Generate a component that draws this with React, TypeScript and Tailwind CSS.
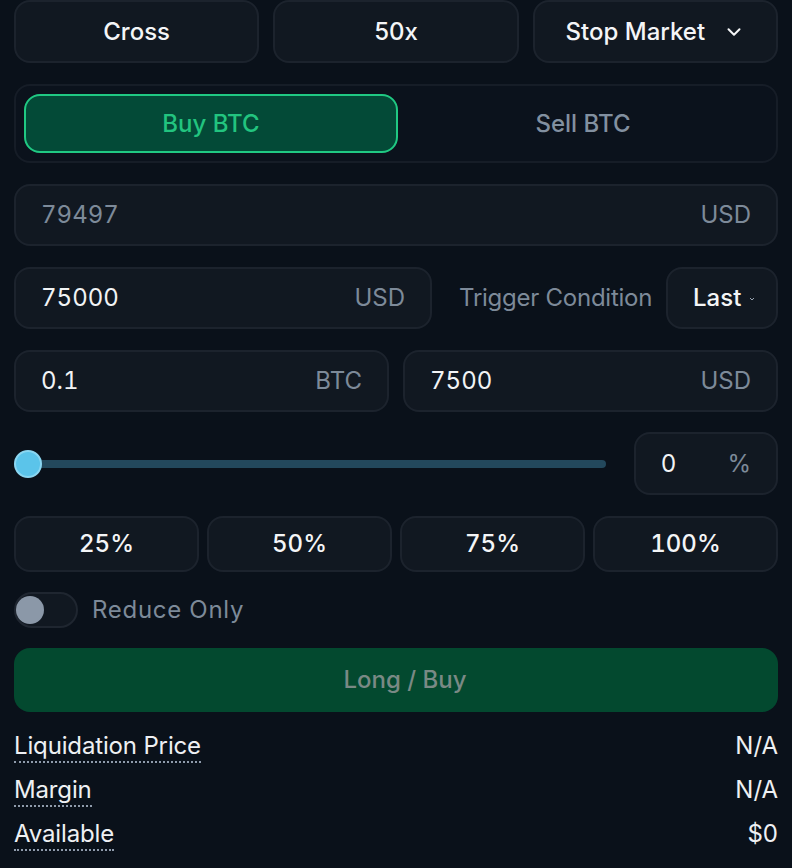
import { ChevronDown } from 'lucide-react';

const box = 'rounded-[16px] border-2 border-[#1c232d] bg-[#111821]';

function Field({ value, unit, dim = false, className = '' }: { value: string; unit: string; dim?: boolean; className?: string }) {
  return (
    <div className={`${box} flex h-[62px] items-center justify-between px-[25px] text-[24px] ${className}`}>
      <span className={`tabular-nums ${dim ? 'text-[#7d8a99]' : 'text-[#f1f3f5]'}`}>{value}</span>
      <span className="text-[#7d8a99]">{unit}</span>
    </div>
  );
}

function InfoRow({ label, value }: { label: string; value: string }) {
  return (
    <div className="flex items-start justify-between text-[24px] leading-[30px]">
      <span className="border-b-2 border-dotted border-[#8f9bab] tracking-[-0.15px] text-[#eef0f3]">{label}</span>
      <span className="text-[#eef0f3]">{value}</span>
    </div>
  );
}

export default function App() {
  return (
    <div className="flex min-h-[868px] w-[792px] flex-col bg-[#0a111a] px-[14px] font-['Inter',sans-serif] text-white">
      <div className="flex h-[63px] gap-[14px]">
        <button className={`${box} flex flex-1 items-center justify-center text-[24px] font-medium text-[#f4f5f7]`}>Cross</button>
        <button className={`${box} flex flex-1 items-center justify-center text-[24px] font-medium text-[#f4f5f7]`}>50x</button>
        <button className={`${box} flex flex-1 items-center justify-center gap-[18px] text-[24px] font-medium text-[#f4f5f7]`}>
          Stop Market
          <ChevronDown size={22} strokeWidth={2.2} />
        </button>
      </div>

      <div className="mt-[21px] flex h-[79px] rounded-[16px] border-2 border-[#161d27] bg-[#0b121c] p-[8px]">
        <button className="flex flex-1 items-center justify-center rounded-[16px] border-2 border-[#20c983] bg-[#034a37] text-[24px] font-medium text-[#22c47f]">
          Buy BTC
        </button>
        <button className="flex flex-1 items-center justify-center text-[24px] font-medium text-[#8290a0]">Sell BTC</button>
      </div>

      <Field value="79497" unit="USD" dim className="mt-[21px]" />

      <div className="mt-[21px] flex h-[62px] items-center">
        <Field value="75000" unit="USD" className="w-[418px]" />
        <span className="ml-[27px] text-[24px] tracking-[-0.25px] text-[#7d8a99]">Trigger Condition</span>
        <div className={`${box} ml-auto flex h-[62px] w-[112px] items-center gap-[8px] pl-[25px] text-[24px] font-medium text-[#f4f5f7]`}>
          Last
          <svg width="6" height="4" viewBox="0 0 6 4" className="mt-[2px]">
            <path d="M1 1l2 2 2-2" stroke="#9aa5b3" strokeWidth="1" fill="none" />
          </svg>
        </div>
      </div>

      <div className="mt-[21px] flex gap-[14px]">
        <Field value="0.1" unit="BTC" className="flex-1" />
        <Field value="7500" unit="USD" className="flex-1" />
      </div>

      <div className="mt-[20px] flex h-[63px] items-center gap-[28px]">
        <div className="relative flex h-[28px] flex-1 items-center">
          <div className="h-[8px] w-full rounded-full bg-[#23485c]" />
          <div className="absolute left-0 top-0 h-[28px] w-[28px] rounded-full border-2 border-[#8ad6f1] bg-[#5bc4ea]" />
        </div>
        <div className={`${box} flex h-[63px] w-[144px] items-center justify-between px-[25px] text-[24px]`}>
          <span className="text-[#f1f3f5]">0</span>
          <span className="text-[#7d8a99]">%</span>
        </div>
      </div>

      <div className="mt-[21px] grid h-[56px] grid-cols-4 gap-[8px]">
        {['25%', '50%', '75%', '100%'].map((p) => (
          <button key={p} className={`${box} flex items-center justify-center text-[24px] font-medium tabular-nums text-[#f4f5f7]`}>
            {p}
          </button>
        ))}
      </div>

      <div className="mt-[20px] flex h-[36px] items-center gap-[14px]">
        <div className="flex h-[36px] w-[64px] items-center rounded-full border-2 border-[#1f2630] bg-[#111821]">
          <div className="h-[28px] w-[28px] rounded-full bg-[#8b98a8]" />
        </div>
        <span className="text-[24px] tracking-[0.7px] text-[#7d8a99]">Reduce Only</span>
      </div>

      <button className="mt-[20px] flex h-[64px] items-center justify-center rounded-[16px] bg-[#03492f] pl-[18px] text-[24px] font-medium text-[#7a8985]">
        Long / Buy
      </button>

      <div className="mt-[19px] flex flex-col gap-[12px]">
        <InfoRow label="Liquidation Price" value="N/A" />
        <InfoRow label="Margin" value="N/A" />
        <InfoRow label="Available" value="$0" />
      </div>
    </div>
  );
}
